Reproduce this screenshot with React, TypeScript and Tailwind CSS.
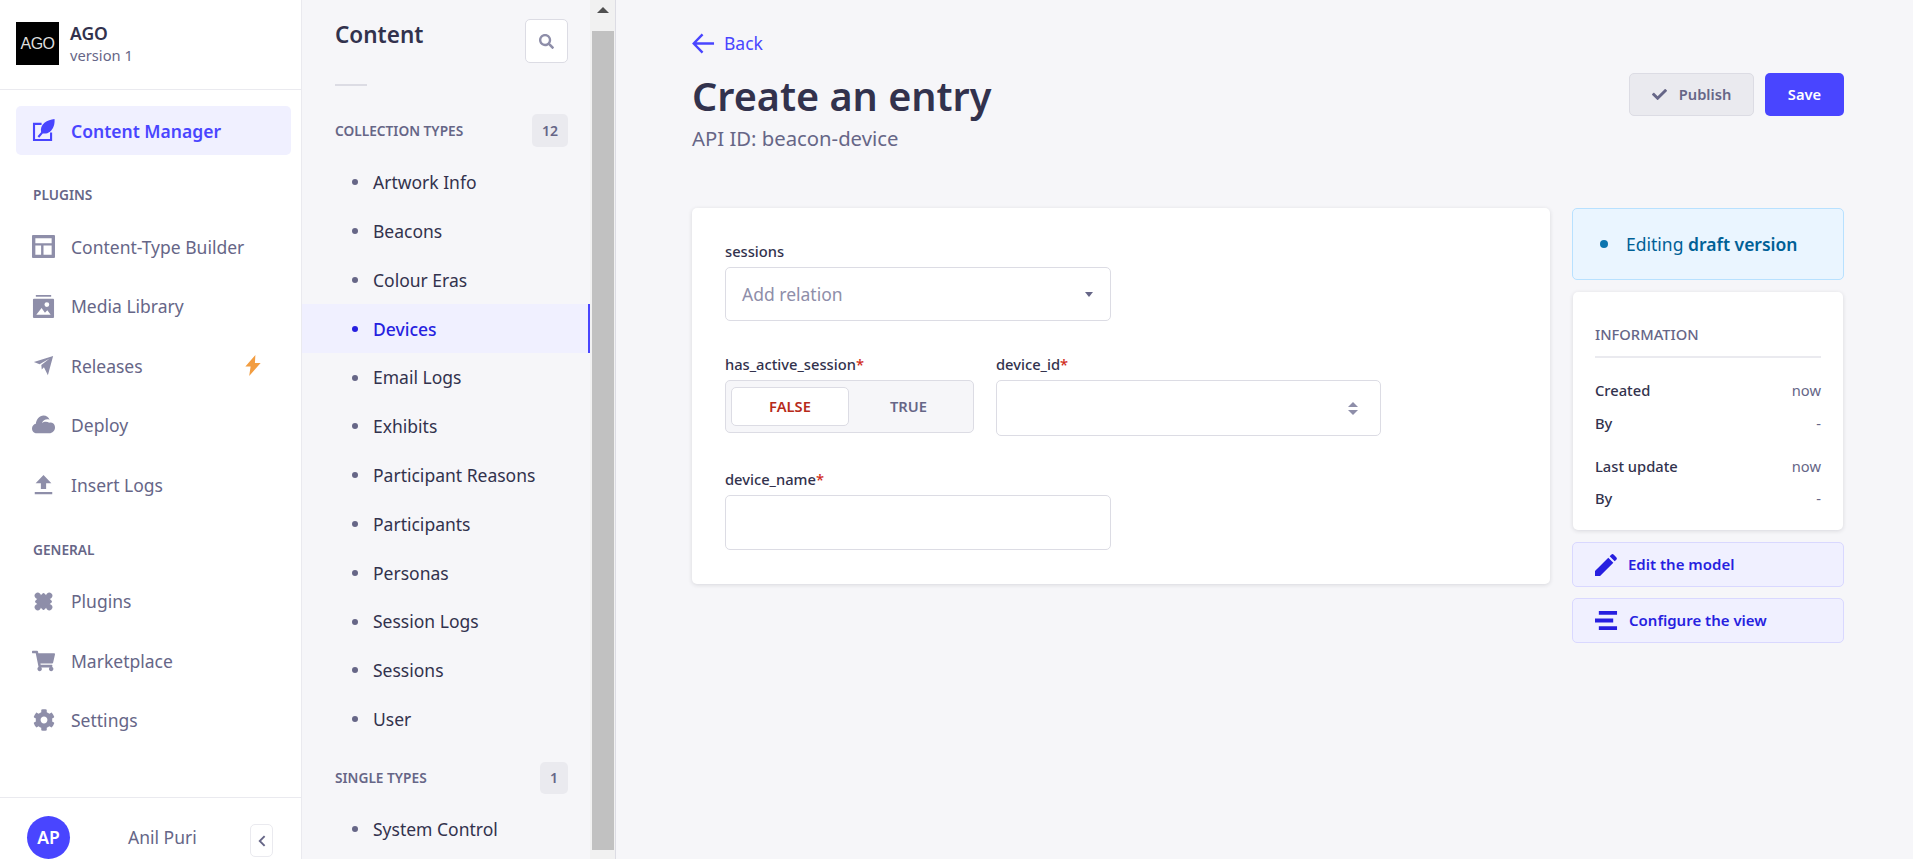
import { FaCheck, FaCog, FaSearch, FaShoppingCart } from "react-icons/fa"
import type { ReactNode } from "react"

const C = "currentColor"

const ContentIcon = () => (
  <svg viewBox="0 0 24 24" className="w-[23px] h-[23px]" fill={C}>
    <path d="M1 4h9v2.200H3.200v14.600h15.600V14H21v9H1z" />
    <path d="M23.500 0c.5 5.500-1.200 10.500-4.800 13.300-2.300 1.800-5 2.200-7.500 1.700L7.500 19.500 5.800 18l3.700-4.300C8.700 10.200 10 6.500 13 4c3-2.500 6.800-3.700 10.500-4z" />
  </svg>
)
const LayoutIcon = () => (
  <svg viewBox="0 0 24 24" className="w-[23px] h-[23px]" fill={C}>
    <path fillRule="evenodd" d="M1 0h22a1 1 0 0 1 1 1v22a1 1 0 0 1-1 1H1a1 1 0 0 1-1-1V1a1 1 0 0 1 1-1zm2.500 3.500v5h17v-5zm0 7.500v9.500h6V11zm8.500 0v9.500h8.500V11z" />
  </svg>
)
const MediaIcon = () => (
  <svg viewBox="0 0 24 24" className="w-[23px] h-[23px]" fill={C}>
    <path d="M4 0h16v1.800H4z" />
    <path fillRule="evenodd" d="M2 4h20a1 1 0 0 1 1 1v18a1 1 0 0 1-1 1H2a1 1 0 0 1-1-1V5a1 1 0 0 1 1-1zm13.500 3.500a2.500 2.500 0 1 0 0 5 2.500 2.500 0 0 0 0-5zM4.500 20.500h15l-3.500-4.500-2.500 2.500-3.500-5z" />
  </svg>
)
const PlaneIcon = () => (
  <svg viewBox="0 0 24 24" className="w-[21px] h-[21px]" fill={C}>
    <path d="M23 1 17 23l-4.500-9L10 16.500l-.5-5L19 4 7.500 10.500 1 8z" />
  </svg>
)
const CloudIcon = () => (
  <svg viewBox="0 0 24 24" className="w-[23px] h-[23px]" fill={C}>
    <path d="M12 1.500c3 0 5.500 1.800 6.300 4.500-3.300-1.200-6.800.4-8 3.400 2.200-1.700 5.300-1.900 7.700-.4 1.800-.3 3.200 0 4.300 1 1 1 1.700 2.500 1.700 4 0 3.300-2.700 6-6 6H5c-2.800 0-5-2.200-5-5 0-2.400 1.700-4.400 4-4.900C4.400 5.700 7.800 1.500 12 1.500z" />
  </svg>
)
const PuzzleIcon = () => (
  <svg viewBox="0 0 24 24" className="w-[23px] h-[23px]" fill={C}>
    <g transform="rotate(45 12 12)">
      <rect x="5.500" y="5.500" width="13" height="13" rx="1" />
      <circle cx="12" cy="3.500" r="3.200" />
      <circle cx="20.500" cy="12" r="3.200" />
      <circle cx="12" cy="20.500" r="3.200" />
      <circle cx="3.500" cy="12" r="3.200" />
    </g>
  </svg>
)
const UploadIcon = () => (
  <svg viewBox="0 0 24 24" className="w-[21px] h-[21px]" fill={C}>
    <path d="M12 1l9 9.500h-6V17H9v-6.500H3zM2 20.500h20V23H2z" />
  </svg>
)
const BoltIcon = () => (
  <svg viewBox="0 0 16 22" className="h-[21px] w-[16px]" fill="#f29d41">
    <path d="M10.500 0 0 12h5.500L4 22l12-13.500h-6z" />
  </svg>
)
const PencilIcon = () => (
  <svg viewBox="0 0 24 24" className="h-[22px] w-[22px]" fill={C}>
    <path d="M0 24v-5.500L14.500 4l5.500 5.500L5.500 24zM16 2.500l1.700-1.700a2 2 0 0 1 2.800 0l2.700 2.700a2 2 0 0 1 0 2.800L21.500 8z" />
  </svg>
)
const ListIcon = () => (
  <svg viewBox="0 0 24 24" className="w-[23px] h-[23px]" fill={C}>
    <path d="M4 2h19v4H4zM0 10h19v4H0zM4 18h19v4H4z" />
  </svg>
)
const LeftArrow = () => (
  <svg viewBox="0 0 24 24" className="w-[23px] h-[23px]" fill="none" stroke={C} strokeWidth="2.500">
    <path d="M23 12H2M11 2.500 1.800 12l9.200 9.500" />
  </svg>
)

function NavRow({ icon, label, right }: { icon: ReactNode; label: string; right?: ReactNode }) {
  return (
    <div className="mx-4 flex h-[59.500px] items-center px-4 text-[#666687]">
      <span className="flex w-[23px] justify-center text-[#8e8ea9]">{icon}</span>
      <span className="ml-[16px] text-[17.500px]">{label}</span>
      {right && <span className="ml-auto mr-[8px]">{right}</span>}
    </div>
  )
}

function Sidebar() {
  return (
    <aside className="flex h-full w-[302px] shrink-0 flex-col border-r border-[#eaeaef] bg-white">
      <div className="flex h-[90px] shrink-0 items-center gap-[11px] border-b border-[#eaeaef] px-4 pb-[2px]">
        <div className="flex h-[43px] w-[43px] items-center justify-center bg-black">
          <span className="font-['Liberation_Sans',sans-serif] text-[16px] font-light tracking-[-0.5px] text-[#dddddd]">AGO</span>
        </div>
        <div>
          <div className="text-[17.500px] leading-[23px] font-semibold text-[#32324d]">AGO</div>
          <div className="text-[14.700px] leading-[20px] text-[#666687]">version 1</div>
        </div>
      </div>

      <div className="ml-4 mt-4 flex h-[49px] w-[275px] shrink-0 items-center rounded-[5px] bg-[#f0f0ff] px-4 text-[#4945ff]">
        <ContentIcon />
        <span className="ml-[16px] pt-[2px] text-[17.500px] font-semibold">Content Manager</span>
      </div>

      <div className="mt-[31px] px-[33px] text-[13.700px] leading-[18px] font-semibold text-[#666687]">PLUGINS</div>
      <div className="mt-[13px]">
        <NavRow icon={<LayoutIcon />} label="Content-Type Builder" />
        <NavRow icon={<MediaIcon />} label="Media Library" />
        <NavRow icon={<PlaneIcon />} label="Releases" right={<BoltIcon />} />
        <NavRow icon={<CloudIcon />} label="Deploy" />
        <NavRow icon={<UploadIcon />} label="Insert Logs" />
      </div>

      <div className="mt-[26px] px-[33px] text-[13.700px] leading-[18px] font-semibold text-[#666687]">GENERAL</div>
      <div className="mt-[13px]">
        <NavRow icon={<PuzzleIcon />} label="Plugins" />
        <NavRow icon={<FaShoppingCart className="h-[22px] w-[23px]" />} label="Marketplace" />
        <NavRow icon={<FaCog className="h-[22px] w-[22px]" />} label="Settings" />
      </div>

      <div className="mt-auto flex h-[62px] shrink-0 items-end border-t border-[#eaeaef] pl-[27px]">
        <div className="flex h-[43px] w-[43px] items-center justify-center rounded-full bg-[#4945ff] text-[17.500px] font-semibold text-white">AP</div>
        <span className="mb-[10px] ml-[58px] text-[17.500px] leading-[23px] text-[#666687]">Anil Puri</span>
        <button className="mb-[2px] ml-auto mr-[28px] flex h-[33px] w-[23px] items-center justify-center rounded-[5px] border border-[#eaeaef] bg-white text-[#666687]">
          <svg viewBox="0 0 10 16" className="h-[12px] w-[8px]" fill="none" stroke={C} strokeWidth="2.500"><path d="M8.500 1.500 2 8l6.500 6.500" /></svg>
        </button>
      </div>
    </aside>
  )
}

const collectionTypes = ["Artwork Info", "Beacons", "Colour Eras", "Devices", "Email Logs", "Exhibits", "Participant Reasons", "Participants", "Personas", "Session Logs", "Sessions", "User"]

function SubRow({ label, active }: { label: string; active?: boolean }) {
  return (
    <div className={active ? "flex h-[48.800px] items-center border-r-2 border-[#4945ff] bg-[#f0f0ff] pl-[50px] font-medium text-[#271fe0]" : "flex h-[48.800px] items-center pl-[50px] text-[#32324d]"}>
      <span className={active ? "h-[6px] w-[6px] rounded-full bg-[#271fe0]" : "h-[6px] w-[6px] rounded-full bg-[#666687]"} />
      <span className="ml-[15px] text-[17.500px]">{label}</span>
    </div>
  )
}

function SectionHeader({ title, count, small }: { title: string; count: number; small?: boolean }) {
  return (
    <div className="flex items-center justify-between pl-[33px] pr-[22px]">
      <span className="pt-[1px] text-[13.700px] font-semibold text-[#666687]">{title}</span>
      <span className={small ? "flex h-[32px] w-[28px] items-center justify-center rounded-[5px] bg-[#eaeaef] text-[14px] font-semibold text-[#666687]" : "flex h-[33px] w-[36px] items-center justify-center rounded-[5px] bg-[#eaeaef] text-[14px] font-semibold text-[#666687]"}>{count}</span>
    </div>
  )
}

function SubNav() {
  return (
    <div className="flex h-full w-[314px] shrink-0 border-r border-[#dcdce4] bg-[#f6f6f9]">
      <div className="h-full w-[288px] shrink-0 overflow-hidden">
        <div className="flex items-start justify-between pl-[33px] pr-[22px] pt-[19px]">
          <h2 className="mt-[1px] text-[22.500px] leading-[30px] font-semibold text-[#32324d]">Content</h2>
          <button className="flex h-[44px] w-[43px] items-center justify-center rounded-[5px] border border-[#dcdce4] bg-white text-[#8e8ea9]">
            <FaSearch className="h-[15px] w-[15px]" />
          </button>
        </div>
        <div className="ml-[33px] mt-[21px] h-[2px] w-[32px] bg-[#dcdce4]" />
        <div className="mt-[28px]"><SectionHeader title="COLLECTION TYPES" count={12} /></div>
        <div className="mt-[11px]">
          {collectionTypes.map((t) => (
            <SubRow key={t} label={t} active={t === "Devices"} />
          ))}
        </div>
        <div className="mt-[18px]"><SectionHeader title="SINGLE TYPES" count={1} small /></div>
        <div className="mt-[11px]"><SubRow label="System Control" /></div>
      </div>
      {/* scrollbar */}
      <div className="flex h-full w-[25px] flex-col items-center bg-[#f1f1f1] pl-[2px] pr-[1px]">
        <div className="flex h-[31px] w-full shrink-0 items-start justify-center pt-[7px]">
          <div className="h-0 w-0 border-x-[6px] border-b-[6px] border-x-transparent border-b-[#505050]" />
        </div>
        <div className="h-[819px] w-full bg-[#c1c1c1]" />
      </div>
    </div>
  )
}

function Label({ text, required }: { text: string; required?: boolean }) {
  return (
    <div className="mb-[6px] text-[14.700px] leading-[20px] font-medium text-[#32324d]">
      {text}
      {required && <span className="text-[#d02b20]">*</span>}
    </div>
  )
}

function Editor() {
  return (
    <div className="h-[376px] flex-1 rounded-[5px] bg-white px-[33px] pt-[33px] shadow-[0_1px_4px_rgba(33,33,52,0.14)]">
      <div className="flex flex-col gap-[33px]">
        <div>
          <Label text="sessions" />
          <div className="flex h-[54px] w-[386px] items-center justify-between rounded-[5px] border border-[#dcdce4] pl-[16px] pr-[17px]">
            <span className="text-[17.500px] text-[#8e8ea9]">Add relation</span>
            <span className="h-0 w-0 border-x-[4px] border-t-[5px] border-x-transparent border-t-[#666687]" />
          </div>
        </div>
        <div className="flex gap-[22px]">
          <div>
            <Label text="has_active_session" required />
            <div className="flex h-[53px] w-[249px] items-center rounded-[5px] border border-[#dcdce4] bg-[#f6f6f9] px-[5px] text-[14.700px] font-semibold">
              <div className="flex h-[39px] w-[118px] items-center justify-center rounded-[5px] border border-[#dcdce4] bg-white text-[#b72b1a]">FALSE</div>
              <div className="flex flex-1 items-center justify-center text-[#666687]">TRUE</div>
            </div>
          </div>
          <div>
            <Label text="device_id" required />
            <div className="flex h-[56px] w-[385px] items-center justify-end rounded-[5px] border border-[#dcdce4] bg-white pr-[22px]">
              <div className="flex flex-col gap-[3px]">
                <span className="h-0 w-0 border-x-[5px] border-b-[5px] border-x-transparent border-b-[#8e8ea9]" />
                <span className="h-0 w-0 border-x-[5px] border-t-[5px] border-x-transparent border-t-[#8e8ea9]" />
              </div>
            </div>
          </div>
        </div>
        <div>
          <Label text="device_name" required />
          <div className="h-[55px] w-[386px] rounded-[5px] border border-[#dcdce4] bg-white" />
        </div>
      </div>
    </div>
  )
}

function InfoRow({ left, right, className }: { left: string; right: string; className?: string }) {
  return (
    <div className={"flex justify-between text-[14.700px] leading-[20px] " + (className ?? "")}>
      <span className="font-medium text-[#32324d]">{left}</span>
      <span className="text-[#666687]">{right}</span>
    </div>
  )
}

function ActionLink({ icon, label }: { icon: ReactNode; label: string }) {
  return (
    <div className="flex h-[45px] items-center rounded-[5px] border border-[#d9d8ff] bg-[#f0f0ff] pl-[22px] text-[#271fe0]">
      {icon}
      <span className="ml-[11px] text-[15px] font-semibold">{label}</span>
    </div>
  )
}

function Aside() {
  return (
    <div className="w-[272px] shrink-0">
      <div className="flex h-[72px] items-center rounded-[5px] border border-[#b8e1ff] bg-[#eaf5ff] pl-[27px] text-[#006096]">
        <span className="h-[8px] w-[8px] rounded-full bg-[#0c75af]" />
        <span className="ml-[18px] text-[17.500px]">Editing <span className="font-semibold">draft version</span></span>
      </div>
      <div className="mx-px mt-[12px] h-[238px] rounded-[5px] bg-white px-[22px] pt-[32px] shadow-[0_1px_4px_rgba(33,33,52,0.14)]">
        <div className="border-b-2 border-[#eaeaef] pb-[12px] text-[14.700px] leading-[20px] font-medium text-[#666687]">INFORMATION</div>
        <InfoRow left="Created" right="now" className="mt-[22px]" />
        <InfoRow left="By" right="-" className="mt-[13px]" />
        <InfoRow left="Last update" right="now" className="mt-[23px]" />
        <InfoRow left="By" right="-" className="mt-[12px]" />
      </div>
      <div className="mt-[12px] flex flex-col gap-[11px]">
        <ActionLink icon={<PencilIcon />} label="Edit the model" />
        <ActionLink icon={<ListIcon />} label="Configure the view" />
      </div>
    </div>
  )
}

export default function App() {
  return (
    <div className="flex h-screen w-full overflow-hidden bg-[#f6f6f9] font-['Noto_Sans',sans-serif]">
      <Sidebar />
      <SubNav />
      <main className="min-w-0 flex-1 pl-[76px] pr-[69px]">
        <div className="flex items-center gap-[9px] pt-[32px] text-[#4945ff]">
          <LeftArrow />
          <span className="text-[17.500px] leading-[23px]">Back</span>
        </div>
        <div className="mt-[16px] flex items-start justify-between">
          <div>
            <h1 className="text-[39.600px] leading-[50px] font-semibold text-[#32324d]">Create an entry</h1>
            <div className="mt-[4px] text-[20.300px] leading-[27px] text-[#666687]">API ID: beacon-device</div>
          </div>
          <div className="mt-[2px] flex gap-[11px]">
            <button className="flex h-[43px] w-[125px] items-center justify-center gap-[12px] rounded-[5px] border border-[#dcdce4] bg-[#eaeaef] text-[14.700px] font-semibold text-[#666687]">
              <FaCheck className="h-[15px] w-[15px]" />
              Publish
            </button>
            <button className="h-[43px] w-[79px] rounded-[5px] bg-[#4945ff] text-[14.700px] font-semibold text-white">Save</button>
          </div>
        </div>
        <div className="mt-[56px] flex items-start gap-[22px]">
          <Editor />
          <Aside />
        </div>
      </main>
    </div>
  )
}
